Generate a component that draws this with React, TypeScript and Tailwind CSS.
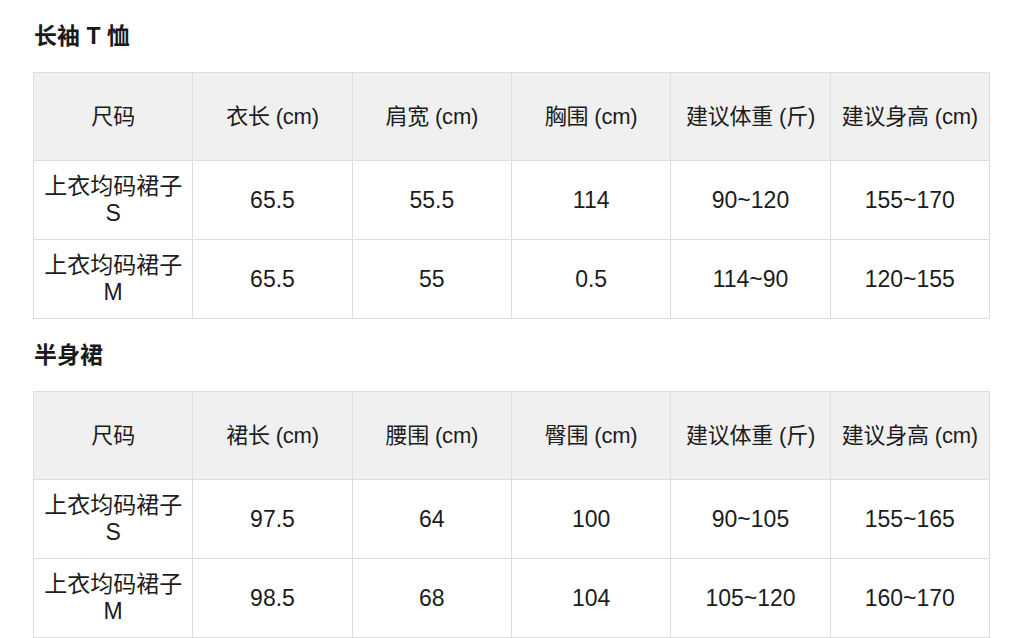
import React from "react";

type Table = {
  title: string;
  head: string[];
  rows: { size: string; cells: string[] }[];
};

const TABLES: Table[] = [
  {
    title: "长袖 T 恤",
    head: ["尺码", "衣长 (cm)", "肩宽 (cm)", "胸围 (cm)", "建议体重 (斤)", "建议身高 (cm)"],
    rows: [
      { size: "S", cells: ["65.5", "55.5", "114", "90~120", "155~170"] },
      { size: "M", cells: ["65.5", "55", "0.5", "114~90", "120~155"] },
    ],
  },
  {
    title: "半身裙",
    head: ["尺码", "裙长 (cm)", "腰围 (cm)", "臀围 (cm)", "建议体重 (斤)", "建议身高 (cm)"],
    rows: [
      { size: "S", cells: ["97.5", "64", "100", "90~105", "155~165"] },
      { size: "M", cells: ["98.5", "68", "104", "105~120", "160~170"] },
    ],
  },
];

function SizeTable({ t }: { t: Table }) {
  return (
    <section>
      <h2 className="flex h-[72px] items-center pl-[34px] text-[23px] font-bold text-[#1a1a1a]">
        {t.title}
      </h2>
      <table className="ml-[33px] w-[957px] table-fixed border-collapse text-center text-[23px] leading-[27px] text-[#1c1c1c]">
        <thead>
          <tr className="h-[88px] bg-[#f0f0f0]">
            {t.head.map((h) => (
              <th key={h} className="border border-[#dddddd] px-0 text-[22px] font-normal tracking-[-0.2px]">
                {h}
              </th>
            ))}
          </tr>
        </thead>
        <tbody>
          {t.rows.map((r) => (
            <tr key={r.size} className="h-[79px]">
              <td className="border border-[#dddddd] px-0">
                上衣均码裙子
                <br />
                {r.size}
              </td>
              {r.cells.map((c, i) => (
                <td key={i} className="border border-[#dddddd] px-1">
                  {c}
                </td>
              ))}
            </tr>
          ))}
        </tbody>
      </table>
    </section>
  );
}

export default function App() {
  return (
    <div
      className="min-h-[638px] bg-white"
      style={{ fontFamily: '"Liberation Sans", "Noto Sans CJK SC", sans-serif' }}
    >
      {TABLES.map((t) => (
        <SizeTable key={t.title} t={t} />
      ))}
    </div>
  );
}
